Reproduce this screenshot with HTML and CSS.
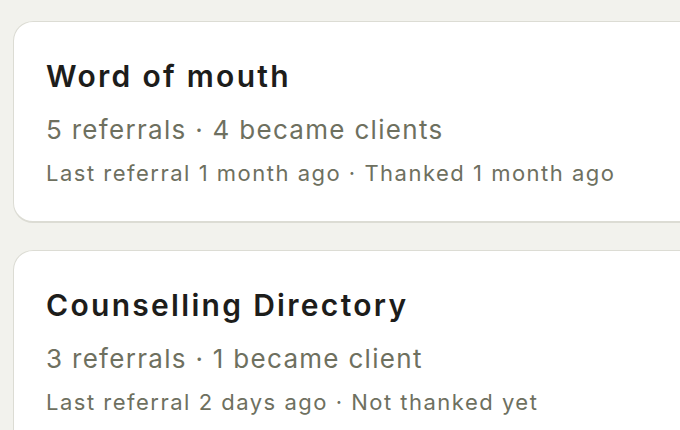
FILE: index.html
```html
<!DOCTYPE html>
<html lang="en">
<head>
    <meta charset="UTF-8">
    <title>Referral sources</title>
    <link rel="stylesheet" href="styles.css">
</head>
<body>
<div class="list">
    <div class="card">
        <h2 class="name">Word of mouth</h2>
        <p class="count">5 referrals · 4 became clients</p>
        <p class="meta">Last referral 1 month ago · Thanked 1 month ago</p>
    </div>
    <div class="card">
        <h2 class="name">Counselling Directory</h2>
        <p class="count">3 referrals · 1 became client</p>
        <p class="meta">Last referral 2 days ago · Not thanked yet</p>
    </div>
</div>
</body>
</html>
```

FILE: styles.css
```css
*{
    margin: 0;
    padding: 0;
    box-sizing: border-box;
}
body{
    background: #f2f2ed;
    font-family: Inter, "Noto Sans", sans-serif;
    overflow: hidden;
}
.list{
    display: flex;
    flex-direction: column;
    gap: 27px;
    padding: 21px 0 0 13px;
    margin-right: -40px;
}
.card{
    background: #fff;
    border: 1.5px solid #dcdcd4;
    border-bottom-width: 2px;
    border-radius: 20px;
    padding: 36px 32px 33px 32px;
}
.name{
    font-size: 30px;
    line-height: 36px;
    font-weight: 600;
    letter-spacing: 2.3px;
    color: #1d1d1b;
}
.count{
    margin-top: 19px;
    font-size: 26px;
    line-height: 34px;
    letter-spacing: 1.3px;
    color: #6e705f;
}
.meta{
    margin-top: 11px;
    font-size: 22px;
    line-height: 30px;
    letter-spacing: 1.5px;
    color: #6e705f;
}
```
